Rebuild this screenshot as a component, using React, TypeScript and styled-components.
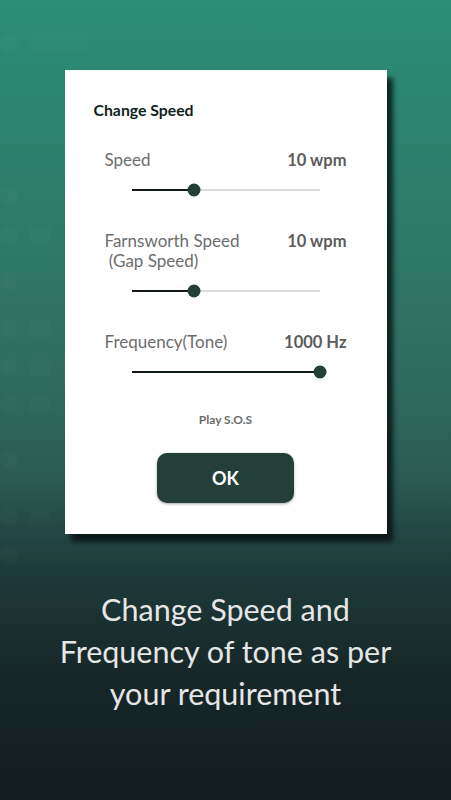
import React from 'react';
import styled, { createGlobalStyle } from 'styled-components';

const GlobalStyle = createGlobalStyle`
  html, body {
    margin: 0;
    padding: 0;
  }
  body {
    font-family: Lato, "Open Sans", "Liberation Sans", sans-serif;
    -webkit-font-smoothing: antialiased;
  }
`;

const Screen = styled.div`
  display: grid;
  grid-template-areas: 'stack';
  width: 451px;
  height: 800px;
  overflow: hidden;
  background: linear-gradient(
    180deg,
    #2b8e77 0%,
    #2d7d6a 25%,
    #2f6b5e 48%,
    #2b5a52 60%,
    #1e3b3a 71%,
    #172728 84%,
    #121e1f 100%
  );
`;

const Backdrop = styled.div`
  grid-area: stack;
  display: flex;
  flex-direction: column;
  gap: 20px;
  padding: 34px 0 0 0;
`;

const GhostRow = styled.div<{ $gap: number }>`
  display: flex;
  align-items: center;
  gap: 12px;
  height: 18px;
  margin-top: ${({ $gap }) => $gap}px;
`;

const GhostDot = styled.div`
  width: 18px;
  height: 18px;
  border-radius: 50%;
  background: rgba(255, 255, 255, 0.018);
`;

const GhostBar = styled.div<{ $w: number }>`
  width: ${({ $w }) => $w}px;
  height: 18px;
  background: rgba(255, 255, 255, 0.015);
`;

const Content = styled.div`
  grid-area: stack;
  display: flex;
  flex-direction: column;
  align-items: center;
  padding-top: 70px;
`;

const Card = styled.div`
  width: 322px;
  height: 464px;
  box-sizing: border-box;
  background: #ffffff;
  box-shadow: 6px 8px 5px rgba(5, 15, 15, 0.8);
  padding: 30px 40px 0 40px;
  display: flex;
  flex-direction: column;
`;

const Title = styled.div`
  margin-left: -11px;
  font-size: 15.8px;
  line-height: 20px;
  font-weight: 700;
  color: #0f1f1c;
`;

const Setting = styled.div<{ $top: number }>`
  display: flex;
  flex-direction: column;
  margin-top: ${({ $top }) => $top}px;
`;

const LabelRow = styled.div`
  display: flex;
  justify-content: space-between;
  align-items: flex-start;
`;

const Label = styled.div`
  font-size: 17px;
  line-height: 20px;
  color: #6d6d6d;
  white-space: pre;
`;

const Value = styled.div`
  font-size: 16.5px;
  line-height: 20px;
  font-weight: 700;
  color: #5c5c5c;
`;

const SliderBox = styled.div`
  display: flex;
  align-items: center;
  height: 20px;
  margin: 10px 27px 0 27px;
`;

const Track = styled.div`
  position: relative;
  flex: 1;
  height: 2px;
  background: #dcdcdc;
`;

const Fill = styled.div`
  height: 2px;
  background: #111a18;
`;

const Thumb = styled.div`
  position: absolute;
  top: 50%;
  width: 13px;
  height: 13px;
  border-radius: 50%;
  background: #243f38;
  transform: translate(-50%, -50%);
`;

const PlayLink = styled.div`
  margin-top: 30px;
  text-align: center;
  font-size: 12px;
  line-height: 16px;
  font-weight: 700;
  color: #6a6a6a;
`;

const OkButton = styled.button`
  align-self: center;
  margin-top: 25px;
  width: 137px;
  height: 50px;
  border: none;
  border-radius: 10px;
  background: #243f38;
  color: #ffffff;
  font-family: inherit;
  font-size: 18px;
  font-weight: 700;
  box-shadow: 0 1px 3px rgba(0, 0, 0, 0.35);
`;

const Caption = styled.div`
  margin-top: 54px;
  width: 420px;
  text-align: center;
  font-size: 30.5px;
  line-height: 42px;
  color: #e6e6e6;
`;

const settings = [
  { label: 'Speed', value: '10 wpm', pos: 33.5, top: 30 },
  { label: 'Farnsworth Speed\n (Gap Speed)', value: '10 wpm', pos: 33.5, top: 31 },
  { label: 'Frequency(Tone)', value: '1000 Hz', pos: 100, top: 31 },
];

const ghosts = [
  { gap: 0, w: 58 },
  { gap: 116, w: 0 },
  { gap: 0, w: 20 },
  { gap: 8, w: 0 },
  { gap: 10, w: 20 },
  { gap: 0, w: 20 },
  { gap: 0, w: 20 },
  { gap: 16, w: 0 },
  { gap: 20, w: 20 },
  { gap: 0, w: 0 },
];

const Slider: React.FC<{ pos: number }> = ({ pos }) => (
  <SliderBox>
    <Track>
      <Fill style={{ width: `${pos}%` }} />
      <Thumb style={{ left: `${pos}%` }} />
    </Track>
  </SliderBox>
);

const App: React.FC = () => (
  <>
    <GlobalStyle />
    <Screen>
      <Backdrop>
        {ghosts.map((g, i) => (
          <GhostRow key={i} $gap={g.gap}>
            <GhostDot />
            {g.w > 0 && <GhostBar $w={g.w} />}
          </GhostRow>
        ))}
      </Backdrop>
      <Content>
        <Card>
          <Title>Change Speed</Title>
          {settings.map(s => (
            <Setting key={s.label} $top={s.top}>
              <LabelRow>
                <Label>{s.label}</Label>
                <Value>{s.value}</Value>
              </LabelRow>
              <Slider pos={s.pos} />
            </Setting>
          ))}
          <PlayLink>Play S.O.S</PlayLink>
          <OkButton>OK</OkButton>
        </Card>
        <Caption>
          Change Speed and
          <br />
          Frequency of tone as per
          <br />
          your requirement
        </Caption>
      </Content>
    </Screen>
  </>
);

export default App;
